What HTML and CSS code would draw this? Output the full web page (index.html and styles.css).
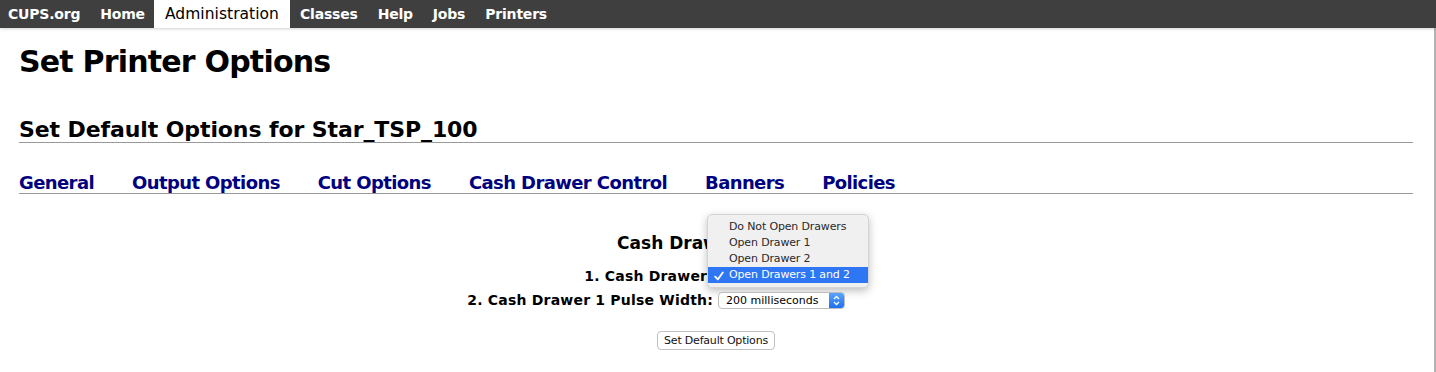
FILE: index.html
```html
<!DOCTYPE html>
<html>
<head>
<meta charset="utf-8">
<title>Set Printer Options - CUPS</title>
<link rel="stylesheet" href="styles.css">
</head>
<body>
<div class="page">
  <div class="header">
    <a href="#" class="nav first">CUPS.org</a>
    <a href="#" class="nav">Home</a>
    <a href="#" class="nav sel">Administration</a>
    <a href="#" class="nav">Classes</a>
    <a href="#" class="nav">Help</a>
    <a href="#" class="nav">Jobs</a>
    <a href="#" class="nav">Printers</a>
  </div>
  <div class="body">
    <h1 class="title">Set Printer Options</h1>
    <h2 class="subtitle">Set Default Options for Star_TSP_100</h2>
    <div class="tabs">
      <a href="#" class="tab">General</a>
      <a href="#" class="tab">Output Options</a>
      <a href="#" class="tab">Cut Options</a>
      <a href="#" class="tab">Cash Drawer Control</a>
      <a href="#" class="tab">Banners</a>
      <a href="#" class="tab">Policies</a>
    </div>
    <div class="panel">
      <h3 class="section">Cash Drawer Control</h3>
      <div class="row">
        <div class="label">1. Cash Drawer:</div>
        <div class="field">
          <div class="select wide"><span class="val">Open Drawers 1 and 2</span><span class="stepper"></span></div>
          <div class="menu">
            <div class="item">Do Not Open Drawers</div>
            <div class="item">Open Drawer 1</div>
            <div class="item">Open Drawer 2</div>
            <div class="item on"><svg class="check" width="10" height="10" viewBox="0 0 10 10"><path d="M1.2 5.6 L3.8 8.4 L8.8 1.4" fill="none" stroke="#fff" stroke-width="1.8" stroke-linecap="round" stroke-linejoin="round"/></svg>Open Drawers 1 and 2</div>
          </div>
        </div>
      </div>
      <div class="row">
        <div class="label">2. Cash Drawer 1 Pulse Width:</div>
        <div class="field">
          <div class="select"><span class="val">200 milliseconds</span><span class="stepper"><svg width="7" height="11" viewBox="0 0 7 11"><path d="M1 4 L3.5 1.5 L6 4 M1 7 L3.5 9.5 L6 7" fill="none" stroke="#fff" stroke-width="1.3"/></svg></span></div>
        </div>
      </div>
      <div class="actions">
        <button class="btn" type="button">Set Default Options</button>
      </div>
    </div>
  </div>
</div>
</body>
</html>
```
FILE: styles.css
```css
html, body {
  margin: 0;
  padding: 0;
  background: #fff;
}
body {
  font-family: "DejaVu Sans", sans-serif;
  color: #000;
}
.page {
  width: 1436px;
}
.header {
  background: #3f3f3f;
  height: 28px;
  display: flex;
  align-items: stretch;
  box-shadow: 0 1px 3px rgba(0,0,0,0.18);
  position: relative;
}
.nav {
  color: #fff;
  text-decoration: none;
  font-weight: bold;
  font-size: 14px;
  letter-spacing: -0.2px;
  display: flex;
  align-items: center;
  padding: 0 10px 0 10px;
}
.nav.first {
  padding-left: 8px;
}
.nav.sel {
  background: #fff;
  color: #000;
  font-weight: normal;
  font-size: 15.5px;
  letter-spacing: 0.05px;
  padding: 0 11px;
  margin-left: -1px;
}
.body {
  padding: 0 21px 0 19px;
  min-height: 344px;
  border-right: 2px solid #b4b4b4;
}
.title {
  font-size: 30px;
  font-weight: bold;
  margin: 0;
  padding-top: 16px;
  line-height: 36px;
  letter-spacing: -0.8px;
}
.subtitle {
  font-size: 22px;
  font-weight: bold;
  margin: 0;
  margin-top: 38px;
  line-height: 24px;
  border-bottom: 1px solid #999;
  padding-bottom: 0;
  letter-spacing: -0.1px;
}
.tabs {
  display: flex;
  gap: 38px;
  margin-top: 29px;
  border-bottom: 1px solid #999;
  padding-bottom: 0;
}
.tab {
  color: #000080;
  font-weight: bold;
  font-size: 18px;
  line-height: 21px;
  text-decoration: none;
  letter-spacing: -0.6px;
}
.panel {
  padding-top: 38px;
}
.section {
  text-align: center;
  font-size: 17px;
  font-weight: bold;
  margin: 0 0 10px 0;
  line-height: 22px;
}
.row {
  display: flex;
  align-items: center;
  height: 24px;
}
.label {
  width: 50%;
  text-align: right;
  font-weight: bold;
  font-size: 14px;
  letter-spacing: 0.2px;
  padding-right: 3px;
  box-sizing: border-box;
}
.field {
  position: relative;
  padding-left: 2px;
}
.select {
  display: flex;
  align-items: center;
  width: 127px;
  height: 17px;
  border: 1px solid #bdbdbd;
  border-radius: 4px;
  background: #fff;
  font-size: 11px;
  box-sizing: border-box;
  overflow: hidden;
}
.select.wide {
  width: 145px;
}
.val {
  flex: 1;
  padding-left: 7px;
  white-space: nowrap;
}
.stepper {
  width: 15px;
  height: 100%;
  background: linear-gradient(#5aa3fb, #1f6ff2);
  display: flex;
  align-items: center;
  justify-content: center;
}
.menu {
  position: absolute;
  left: -9px;
  top: -54px;
  width: 162px;
  padding: 4px 0;
  background: #f0f0f0;
  border: 1px solid #d4d4d4;
  border-radius: 5px;
  box-shadow: 0 3px 8px rgba(0,0,0,0.25);
  font-size: 11px;
  letter-spacing: -0.15px;
  color: #2a2a2a;
  box-sizing: border-box;
}
.item {
  height: 16px;
  line-height: 16px;
  padding-left: 21px;
  position: relative;
  white-space: nowrap;
}
.item.on {
  background: #2f76f5;
  color: #fff;
}
.check {
  position: absolute;
  left: 6px;
  top: 4px;
}
.actions {
  display: flex;
  justify-content: center;
  padding-top: 19px;
}
.btn {
  font-family: "DejaVu Sans", sans-serif;
  font-size: 11px;
  letter-spacing: -0.2px;
  height: 19px;
  padding: 0 6px;
  border: 1px solid #c2c2c2;
  border-radius: 4px;
  background: #fff;
  color: #111;
}
```
